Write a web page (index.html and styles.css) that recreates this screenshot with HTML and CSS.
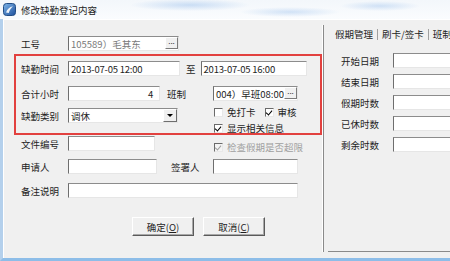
FILE: index.html
```html
<!DOCTYPE html>
<html lang="zh-CN">
<head>
    <meta charset="UTF-8">
    <title>修改缺勤登记内容</title>
    <link rel="stylesheet" href="styles.css">
</head>
<body>
<div class="window">
    <div class="titlebar">
        <svg class="app-icon" width="13" height="13" viewBox="0 0 13 13">
            <defs>
                <linearGradient id="ig" x1="0" y1="0" x2="1" y2="1">
                    <stop offset="0" stop-color="#7fb6ea"/>
                    <stop offset="1" stop-color="#1c4f9c"/>
                </linearGradient>
            </defs>
            <rect x="0.5" y="0.5" width="12" height="12" rx="3" fill="url(#ig)" stroke="#234e86"/>
            <path d="M3 9.5 C4 6 6.5 4 10 3.2 C8 5 6.5 7 5.8 10 Z" fill="#ffffff" opacity="0.9"/>
        </svg>
        <span class="title">修改缺勤登记内容</span>
    </div>

    <div class="client">
        <div class="main">
            <div class="row r-no">
                <label class="lbl">工号</label>
                <div class="field w111 disabled">105589）毛其东<span class="dots">...</span></div>
            </div>
            <div class="row r-time">
                <label class="lbl">缺勤时间</label>
                <div class="field w112 mono">2013-07-05 12:00</div>
                <span class="to">至</span>
                <div class="field w106 mono">2013-07-05 16:00</div>
            </div>
            <div class="row r-hours">
                <label class="lbl">合计小时</label>
                <div class="field w92 num mono">4</div>
                <span class="lbl-mid">班制</span>
                <div class="field w85">004）早班08:00<span class="dots">...</span></div>
            </div>

            <div class="split">
                <div class="split-left">
                    <div class="row r-type">
                        <label class="lbl">缺勤类别</label>
                        <div class="field combo w110">调休<span class="arrow"></span></div>
                    </div>
                    <div class="row r-file">
                        <label class="lbl">文件编号</label>
                        <div class="field w87"></div>
                    </div>
                </div>
                <div class="split-right">
                    <div class="checkline">
                        <span class="check"></span><span class="cap">免打卡</span>
                        <span class="check on gap"></span><span class="cap">审核</span>
                    </div>
                    <div class="checkline">
                        <span class="check on"></span><span class="cap">显示相关信息</span>
                    </div>
                    <div class="checkline off">
                        <span class="check on"></span><span class="cap">检查假期是否超限</span>
                    </div>
                </div>
            </div>

            <div class="row r-apply">
                <label class="lbl">申请人</label>
                <div class="field w89"></div>
                <span class="lbl-mid wide">签署人</span>
                <div class="field w85"></div>
            </div>
            <div class="row r-note">
                <label class="lbl">备注说明</label>
                <div class="field w230"></div>
            </div>

            <div class="actions">
                <button class="btn">确定(<u>O</u>)</button>
                <button class="btn">取消(<u>C</u>)</button>
            </div>

            <div class="mark"></div>
        </div>

        <div class="side">
            <div class="tabs">
                <span class="tab">假期管理</span>
                <span class="tab">刷卡/签卡</span>
                <span class="tab">班制</span>
            </div>
            <div class="panel">
                <div class="prow"><span class="plbl">开始日期</span><div class="field pfield"></div></div>
                <div class="prow"><span class="plbl">结束日期</span><div class="field pfield"></div></div>
                <div class="prow"><span class="plbl">假期时数</span><div class="field pfield"></div></div>
                <div class="prow"><span class="plbl">已休时数</span><div class="field pfield"></div></div>
                <div class="prow"><span class="plbl">剩余时数</span><div class="field pfield"></div></div>
            </div>
        </div>
    </div>
</div>
</body>
</html>
```

FILE: styles.css
```css
body {
    margin: 0;
    width: 450px;
    height: 261px;
    overflow: hidden;
    font-family: "Noto Sans CJK SC", "Liberation Sans", sans-serif;
    font-size: 9.5px;
    color: #1e1e1e;
}
.window {
    height: 261px;
    display: flex;
    flex-direction: column;
}
.titlebar {
    height: 19px;
    display: flex;
    align-items: center;
    padding-left: 3px;
    background:
        radial-gradient(ellipse 60px 6px at 190px 5px, rgba(120,170,230,0.35), transparent),
        radial-gradient(ellipse 50px 5px at 290px 12px, rgba(120,170,230,0.3), transparent),
        radial-gradient(ellipse 40px 5px at 380px 6px, rgba(120,170,230,0.3), transparent),
        linear-gradient(#f3f7fb, #fafcfe);
}
.app-icon {
    margin-right: 5px;
}
.title {
    color: #222;
    font-size: 9.5px;
}
.client {
    flex: 1;
    display: flex;
    background: #f0f0f0;
    border-left: 3px solid #b4d0ec;
    border-bottom: 3px solid #8dbde8;
    box-shadow: inset 1px 1px 0 #ffffff;
}
.main {
    width: 320px;
    position: relative;
    padding: 17px 0 0 18px;
    box-sizing: border-box;
}
.row {
    display: flex;
    align-items: center;
    height: 15px;
}
.lbl {
    width: 47px;
}
.r-time, .r-hours {
    margin-top: 10px;
}
.r-apply {
    margin-top: 4px;
}
.r-note {
    margin-top: 9px;
}
.field {
    height: 15px;
    box-sizing: border-box;
    background: #fff;
    border: 1px solid;
    border-color: #8c8c8c #e6e6e6 #e6e6e6 #6e6e6e;
    display: flex;
    align-items: center;
    padding-left: 2px;
    white-space: nowrap;
    position: relative;
}
.mono {
    letter-spacing: -0.2px;
}
.num {
    justify-content: flex-end;
    padding-right: 6px;
}
.disabled {
    color: #7a7a7a;
}
.w85 { width: 85px; }
.w87 { width: 87px; }
.w89 { width: 89px; }
.w92 { width: 92px; }
.w106 { width: 106px; }
.w110 { width: 110px; }
.w111 { width: 111px; }
.w112 { width: 112px; }
.w230 { width: 230px; }
.dots {
    position: absolute;
    right: 0;
    top: 0;
    width: 13px;
    height: 12px;
    box-sizing: border-box;
    background: #f0f0f0;
    border: 1px solid;
    border-color: #fff #7a7a7a #7a7a7a #fff;
    font-size: 8px;
    line-height: 6px;
    text-align: center;
    color: #333;
}
.combo .arrow {
    position: absolute;
    right: 0;
    top: 0;
    width: 14px;
    height: 13px;
    box-sizing: border-box;
    background: #f0f0f0;
    border: 1px solid;
    border-color: #fff #6e6e6e #6e6e6e #fff;
}
.combo .arrow::after {
    content: "";
    position: absolute;
    left: 3px;
    top: 4px;
    border-left: 3px solid transparent;
    border-right: 3px solid transparent;
    border-top: 3px solid #000;
}
.to {
    margin: 0 5px 0 6px;
}
.lbl-mid {
    margin-left: 7px;
    width: 46px;
}
.lbl-mid.wide {
    margin-left: 14px;
    width: 42px;
}
.split {
    display: flex;
    margin-top: 3px;
}
.split-left {
    width: 193px;
}
.r-type {
    margin-top: 4px;
}
.r-file {
    margin-top: 13px;
}
.checkline {
    height: 16px;
    display: flex;
    align-items: center;
}
.checkline.off {
    margin-top: 3px;
    color: #a0a0a0;
}
.check {
    width: 9px;
    height: 9px;
    box-sizing: border-box;
    background: #fff;
    border: 1px solid;
    border-color: #6a6a6a #e8e8e8 #e8e8e8 #6a6a6a;
    margin-right: 4px;
    position: relative;
}
.check.gap {
    margin-left: 9px;
}
.check.on::after {
    content: "";
    position: absolute;
    left: 1px;
    top: 0px;
    width: 3px;
    height: 5px;
    border-right: 1.5px solid #000;
    border-bottom: 1.5px solid #000;
    transform: rotate(40deg);
}
.off .check {
    background: #f4f4f4;
}
.off .check.on::after {
    border-color: #a0a0a0;
}
.actions {
    display: flex;
    gap: 9px;
    margin-top: 19px;
    padding-left: 111px;
}
.btn {
    width: 62px;
    height: 19px;
    padding: 0;
    font-family: inherit;
    font-size: 9.5px;
    color: #1e1e1e;
    background: #f0f0f0;
    border: 1px solid;
    border-color: #ffffff #5a5a5a #5a5a5a #ffffff;
    box-shadow: inset -1px -1px 0 #a8a8a8;
}
.mark {
    position: absolute;
    left: 11px;
    top: 35px;
    width: 308px;
    height: 81px;
    box-sizing: border-box;
    border: 2px solid #e2413f;
}
.side {
    flex: 1;
    display: flex;
    flex-direction: column;
    margin: 6px 0 6px 0;
    border-left: 1px solid #8a8a8a;
    box-shadow: -1px 0 0 #ffffff;
    overflow: hidden;
}
.tabs {
    display: flex;
    height: 14px;
    align-items: center;
    margin-top: 2px;
    padding-left: 11px;
    white-space: nowrap;
}
.tab {
    padding-right: 4px;
    margin-right: 4px;
    border-right: 1px solid #a0a0a0;
    line-height: 11px;
}
.tab:last-child {
    border-right: none;
}
.panel {
    flex: 1;
    margin-left: 4px;
    border-bottom: 1px solid #8a8a8a;
    padding-top: 12px;
}
.prow {
    display: flex;
    align-items: center;
    height: 15px;
    margin-bottom: 6px;
    padding-left: 13px;
}
.plbl {
    width: 52px;
}
.pfield {
    flex: 1;
    border-right: none;
}
```
